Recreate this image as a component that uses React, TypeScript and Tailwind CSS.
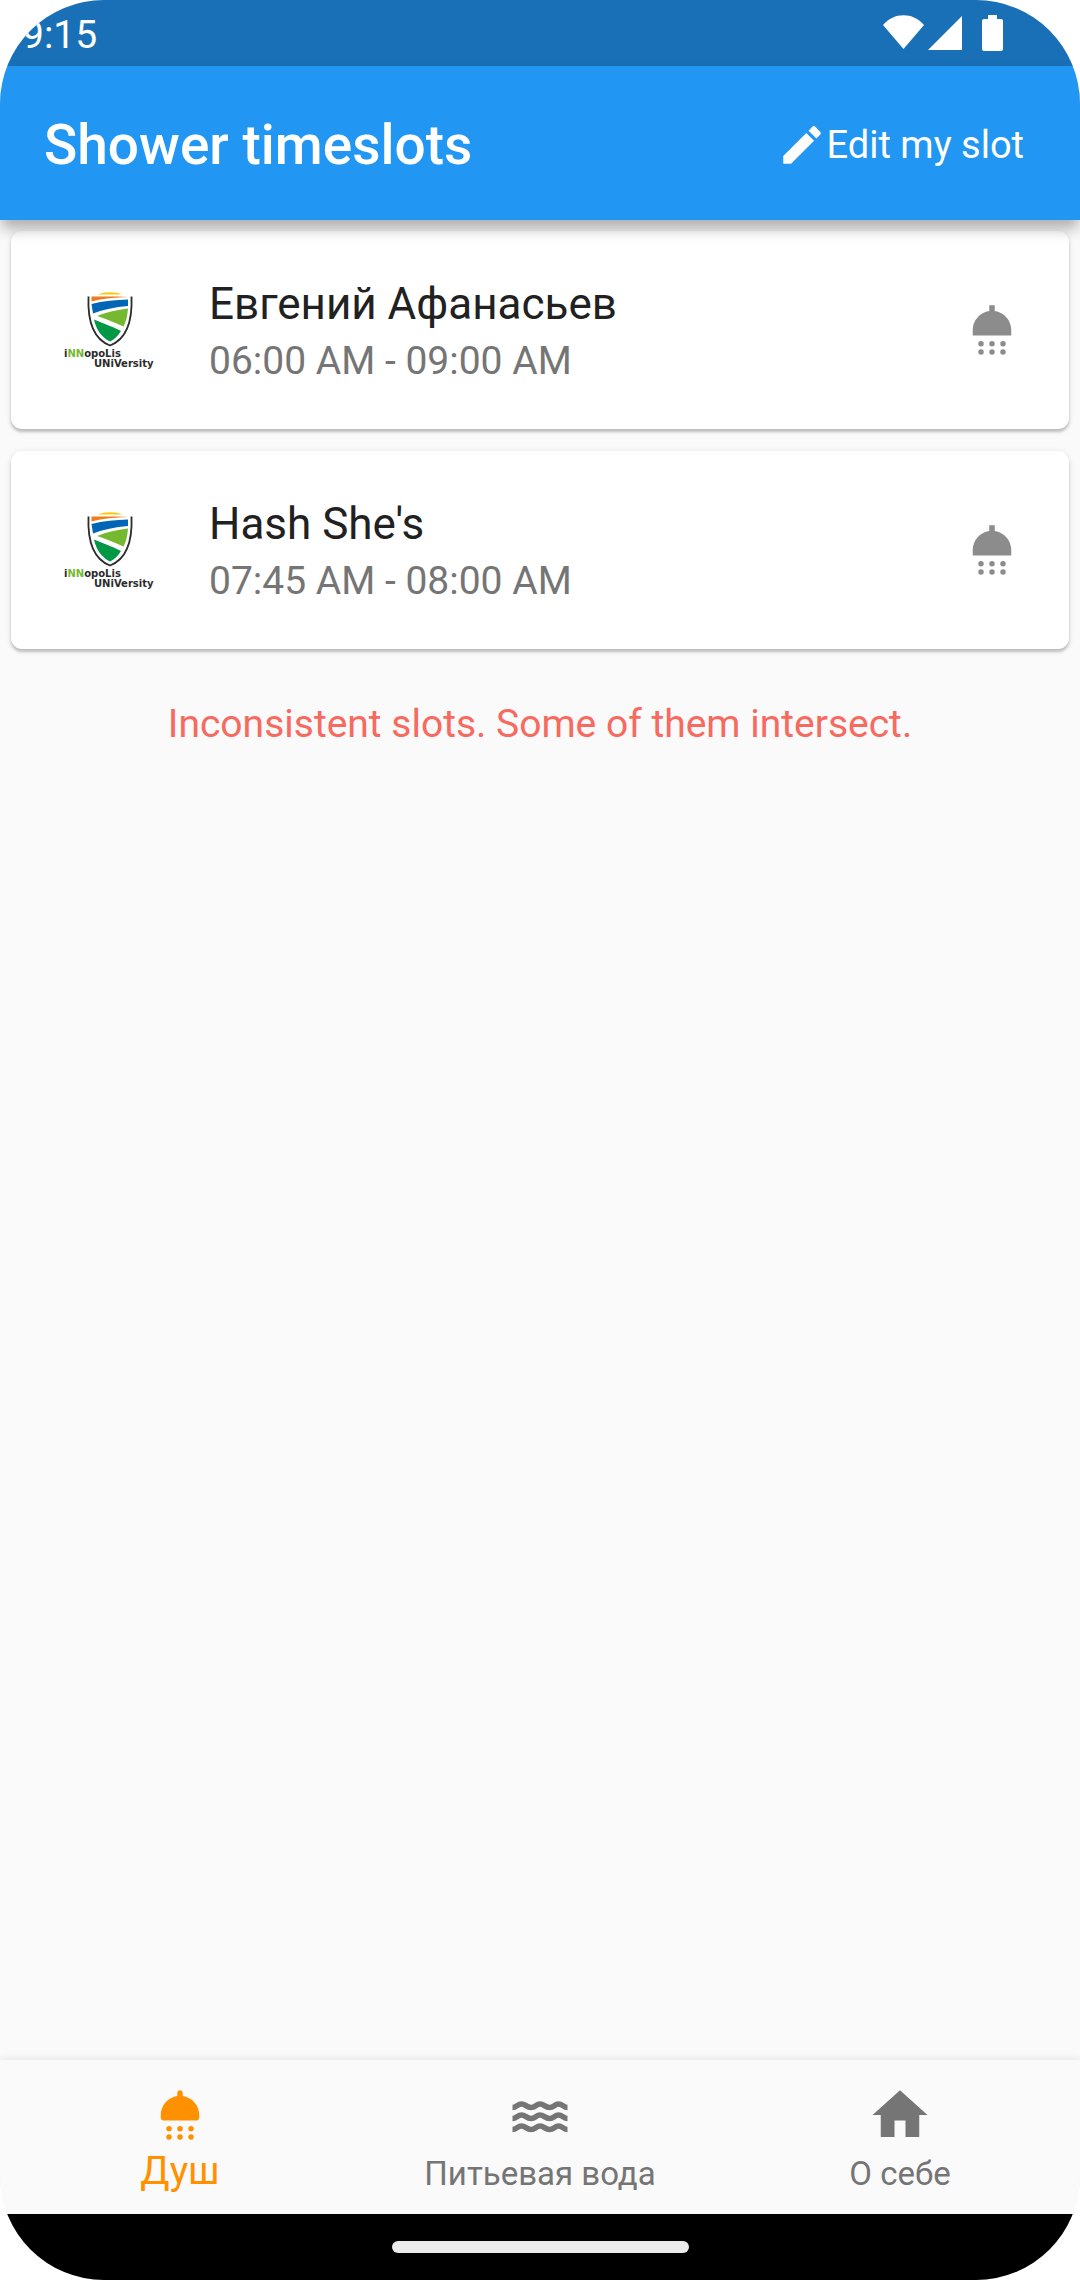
import React from "react";

const SHOWER_DOTS =
  "M9 17a1 1 0 1 1-2 0 1 1 0 0 1 2 0zm4 0a1 1 0 1 1-2 0 1 1 0 0 1 2 0zm4 0a1 1 0 1 1-2 0 1 1 0 0 1 2 0zm-8 3a1 1 0 1 1-2 0 1 1 0 0 1 2 0zm4 0a1 1 0 1 1-2 0 1 1 0 0 1 2 0zm4 0a1 1 0 1 1-2 0 1 1 0 0 1 2 0z";

function Icon({ d, className }: { d: string; className?: string }) {
  return (
    <svg viewBox="0 0 24 24" fill="currentColor" aria-hidden="true" className={className}>
      <path d={d} />
    </svg>
  );
}

const icons = {
  showerSharp: SHOWER_DOTS + "M19 14v-2c0-3.530-2.610-6.430-6-6.920V3h-2v2.080C7.610 5.570 5 8.470 5 12v2z",
  shower:
    SHOWER_DOTS +
    "M13 5.080V4c0-.55-.45-1-1-1s-1 .45-1 1v1.080C7.610 5.570 5 8.470 5 12v1c0 .55.45 1 1 1h12c.55 0 1-.45 1-1v-1c0-3.530-2.610-6.430-6-6.920z",
  edit: "M3 17.250V21h3.750L17.810 9.940l-3.750-3.750L3 17.250zM20.710 7.040c.39-.39.39-1.020 0-1.410l-2.340-2.340a.996.996 0 0 0-1.410 0l-1.830 1.830 3.750 3.750 1.830-1.830z",
  home: "M10 20v-6h4v6h5v-8h3L12 3 2 12h3v8z",
};

function WavesIcon() {
  const wave = "c4 0 5-3.500 9-3.500s5 3.500 9.500 3.500s5-3.500 9-3.500s5 3.500 9.500 3.500s5-3.500 9-3.500s5 3.500 9 3.500";
  return (
    <svg viewBox="0 0 66 66" fill="none" stroke="currentColor" strokeWidth="5.6" aria-hidden="true" className="size-[66px]">
      <path d={`M5.500 25.500${wave}M5.500 36.500${wave}M5.500 47.500${wave}`} />
    </svg>
  );
}

function UniversityLogo() {
  return (
    <svg
      viewBox="0 0 96 80"
      role="img"
      aria-label="Innopolis University"
      className="h-20 w-24 shrink-0 font-['DejaVu_Sans',sans-serif] text-[10px] font-bold"
    >
      <path d="M35 4.500C41 1.500 53 1.500 59 4.500z" fill="#fdc60b" />
      <path d="M25.500 6.500C24.500 30 30 49 47 55.500C64 49 69.500 30 68.500 6.500" fill="none" stroke="#2b2b2b" strokeWidth="1.800" />
      <path d="M28.500 6.500H55L65 7C52 7.500 40 8.500 28.500 11.500z" fill="#ee7d1a" />
      <path d="M28.500 14C40 11 53 10 65 9.500V16C52 17 40 19.500 30 23.500z" fill="#0066b5" />
      <path d="M34 26C44 22 54 20 65 18.500C64.500 26 63 32 60.500 36.500C51 32 43 29 34 26z" fill="#76b82f" />
      <path d="M31 29.500C40 33 49 36.500 58 41C55 46 51 49.500 47 51.500C38 47 33 39 31 29.500z" fill="#009844" />
      <text x="1" y="67" fill="#2b2b2b">
        i<tspan fill="#76b82f">NN</tspan>opoLis
      </text>
      <text x="31" y="77" fill="#2b2b2b">
        UNiVersity
      </text>
    </svg>
  );
}

const slots = [
  { name: "Евгений Афанасьев", time: "06:00 AM - 09:00 AM" },
  { name: "Hash She's", time: "07:45 AM - 08:00 AM" },
];

const tabs = [
  { label: "Душ", icon: <Icon d={icons.shower} className="size-[66px]" />, active: true },
  { label: "Питьевая вода", icon: <WavesIcon />, active: false },
  { label: "О себе", icon: <Icon d={icons.home} className="size-[66px]" />, active: false },
];

export default function App() {
  return (
    <div className="min-h-screen bg-white font-[Roboto,sans-serif]">
      <div className="flex min-h-screen flex-col overflow-hidden rounded-[104px] bg-[#fafafa]">
        <div className="flex h-[66px] shrink-0 items-center justify-between bg-[#1a70b7] pr-[73px] pl-[22px] text-white">
          <span className="pt-1 text-[39px] leading-[48px]">9:15</span>
          <svg viewBox="0 0 124 40" fill="currentColor" aria-hidden="true" className="h-10 w-[124px]">
            <path d="M0 12C11-1 30-1 41 12L20.500 36z" />
            <path d="M79 3V37H45z" />
            <path d="M105 2h9v4h4q2 0 2 2v28q0 2-2 2h-17q-2 0-2-2V8q0-2 2-2h4z" />
          </svg>
        </div>

        <header className="z-10 flex h-[154px] shrink-0 items-center justify-between bg-[#2196f3] pt-1 pr-14 pl-11 text-white shadow-[0_11px_14px_-3px_rgba(0,0,0,0.2),0_8px_14px_rgba(0,0,0,0.14)]">
          <h1 className="text-[55px] leading-[64px] font-medium">Shower timeslots</h1>
          <button type="button" className="flex items-center text-[38px] leading-[48px]">
            <Icon d={icons.edit} className="size-[50px]" />
            Edit my slot
          </button>
        </header>

        <main className="flex flex-1 flex-col">
          <ul className="flex flex-col gap-[22px] px-[11px] pt-[11px]">
            {slots.map((slot) => (
              <li
                key={slot.name}
                className="flex h-[198px] items-center rounded-[11px] bg-white pr-11 pl-[52px] shadow-[0_3px_3px_rgba(0,0,0,0.2),0_1px_6px_rgba(0,0,0,0.1)]"
              >
                <UniversityLogo />
                <div className="ml-[50px] flex-1 pt-1.5">
                  <p className="text-[44px] leading-[56px] text-[#212121]">{slot.name}</p>
                  <p className="text-[39px] leading-[58px] text-[#757575]">{slot.time}</p>
                </div>
                <Icon d={icons.showerSharp} className="size-[66px] text-[#8c8c8c]" />
              </li>
            ))}
          </ul>
          <p className="mt-[51px] text-center text-[39px] leading-[48px] text-[#f66a5f]">
            Inconsistent slots. Some of them intersect.
          </p>
        </main>

        <nav className="grid h-[154px] shrink-0 grid-cols-3 bg-[#fafafa] shadow-[0_-2px_8px_rgba(0,0,0,0.08)]">
          {tabs.map((tab) => (
            <button
              key={tab.label}
              type="button"
              aria-current={tab.active ? "page" : undefined}
              className={
                tab.active
                  ? "flex flex-col items-center pt-[22px] text-[39px] leading-[46px] text-[#ff9100]"
                  : "flex flex-col items-center pt-[22px] text-[33px] leading-[52px] text-[#757575]"
              }
            >
              {tab.icon}
              {tab.label}
            </button>
          ))}
        </nav>

        <div className="flex h-[66px] shrink-0 items-center justify-center bg-black">
          <div className="h-3 w-[297px] rounded-full bg-[#ebebeb]" />
        </div>
      </div>
    </div>
  );
}
